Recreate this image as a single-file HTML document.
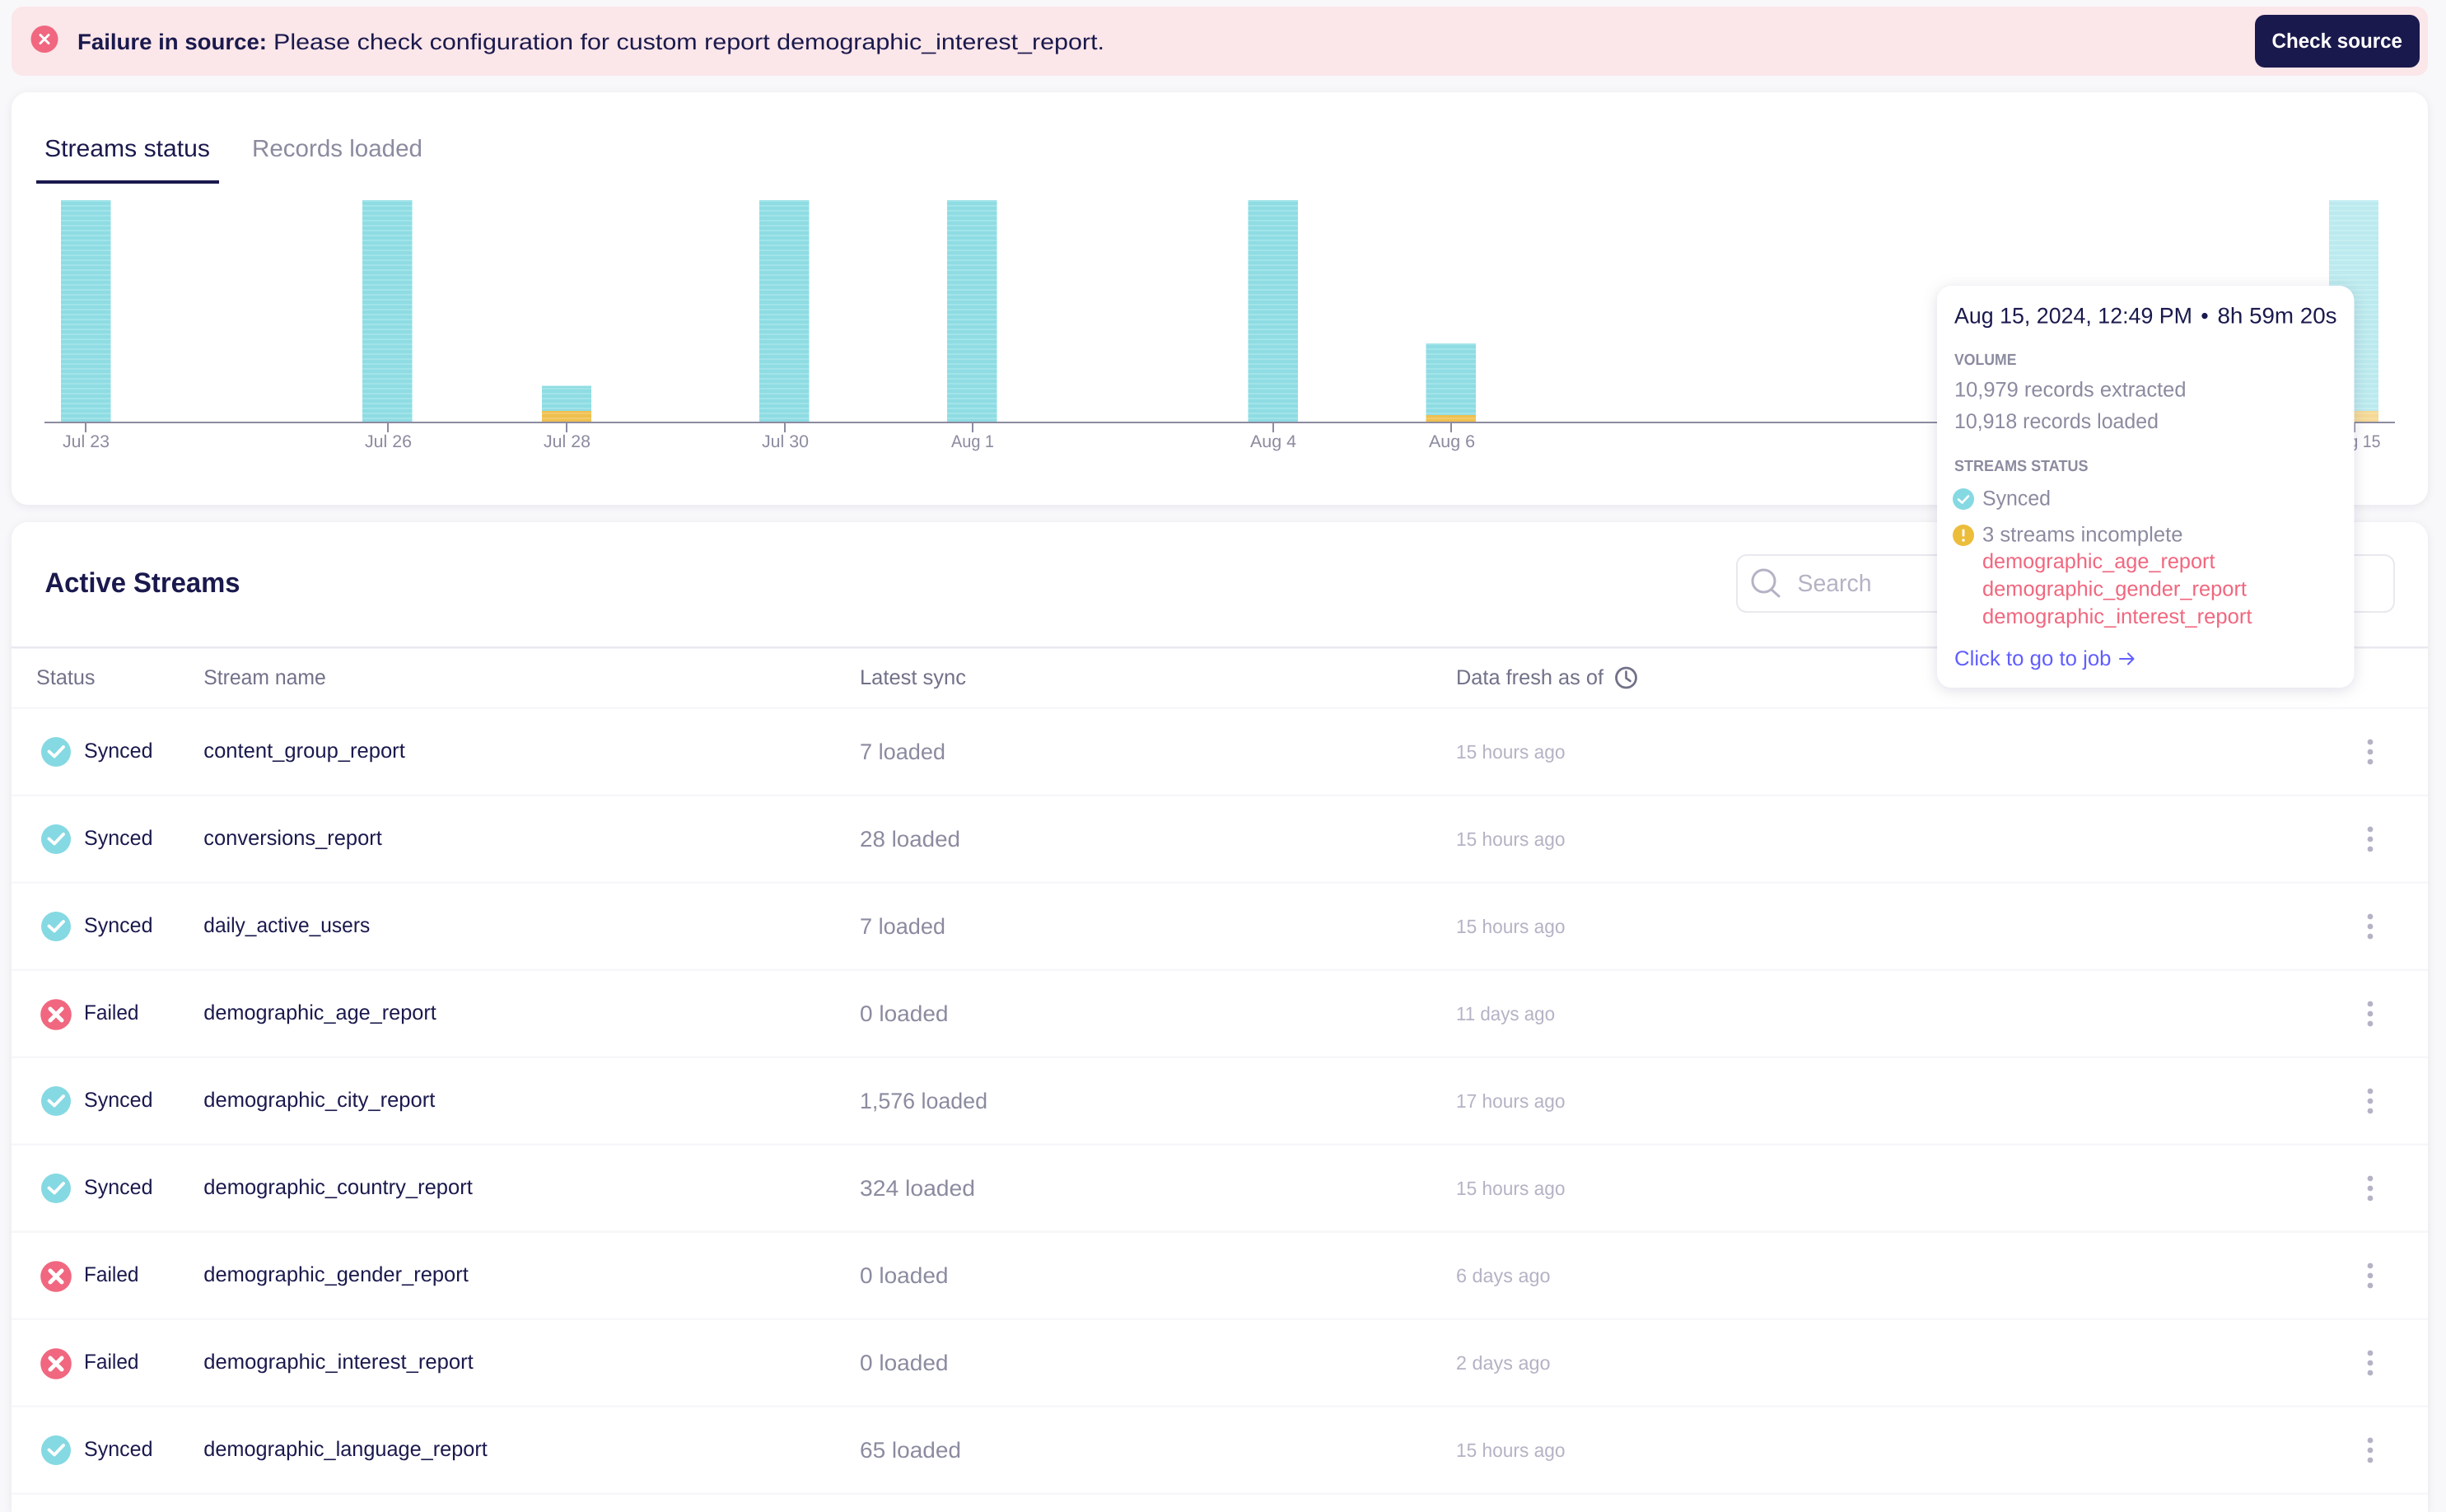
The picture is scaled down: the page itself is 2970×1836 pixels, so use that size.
<!DOCTYPE html>
<html><head><meta charset="utf-8"><title>Streams</title>
<style>
html,body{margin:0;padding:0;width:2970px;height:1836px;overflow:hidden;background:#f8f8fb}
svg{display:block;position:absolute;left:0;top:0;overflow:hidden}
text{font-family:"Liberation Sans",sans-serif;text-rendering:geometricPrecision;fill:#1a194d}
.row{font-size:25.5px}
.hd{font-size:25.5px;fill:#717189}
.lat{font-size:27px;fill:#8b8ba0}
.fr{font-size:23.5px;fill:#b4b3c5}
.ax{font-size:21px;fill:#8b8ba0}
.tg{font-size:25.5px;fill:#8b8ba0}
.cap{font-size:19px;font-weight:bold;fill:#8b8ba0}
.red{font-size:25.5px;fill:#f0677f}
</style></head><body>
<svg width="2970" height="1836" viewBox="0 0 2970 1836" xmlns="http://www.w3.org/2000/svg">
<defs>
<pattern id="pt" width="10" height="6" patternUnits="userSpaceOnUse" y="243"><rect width="10" height="6" fill="#8fdce3"/><rect y="0" width="10" height="2" fill="#a2e4e9"/></pattern>
<pattern id="py" width="10" height="6" patternUnits="userSpaceOnUse" y="243"><rect width="10" height="6" fill="#efc04f"/><rect y="0" width="10" height="2" fill="#f2cb6b"/></pattern>
<filter id="sh" x="-5%" y="-5%" width="110%" height="110%"><feDropShadow dx="0" dy="2" stdDeviation="5" flood-color="#1a194d" flood-opacity=".07"/></filter>
<filter id="sh2" x="-10%" y="-10%" width="120%" height="120%"><feDropShadow dx="0" dy="3" stdDeviation="9" flood-color="#1a194d" flood-opacity=".13"/></filter>
<symbol id="ok" viewBox="-18 -18 36 36" overflow="visible"><circle r="18" fill="#85d9e2"/><path d="M-8.5-0.5L-2 5.500L9-6" fill="none" stroke="#fff" stroke-width="3.800" stroke-linecap="round" stroke-linejoin="round"/></symbol>
<symbol id="no" viewBox="-18 -18 36 36" overflow="visible"><circle r="18.800" fill="#f0677f"/><path d="M-7-7L7 7M7-7L-7 7" fill="none" stroke="#fff" stroke-width="5" stroke-linecap="round"/></symbol>
<g id="dots" fill="#b4b3c5"><circle cx="2878" cy="901" r="3.4"/><circle cx="2878" cy="913" r="3.4"/><circle cx="2878" cy="925" r="3.4"/></g>
</defs>

<!-- banner -->
<rect x="14" y="8" width="2934" height="84" rx="14" fill="#fbe6e9"/>
<circle cx="54" cy="47.5" r="16.5" fill="#f0677f"/>
<path d="M49 42.5L59 52.5M59 42.5L49 52.5" stroke="#fff" stroke-width="3" stroke-linecap="round"/>
<text x="94" y="60" font-size="27" font-weight="bold" textLength="230" lengthAdjust="spacingAndGlyphs">Failure in source:</text>
<text x="332" y="60" font-size="27" textLength="1009" lengthAdjust="spacingAndGlyphs">Please check configuration for custom report demographic_interest_report.</text>
<rect x="2738" y="18" width="200" height="64" rx="12" fill="#1a194d"/>
<text x="2758.5" y="58" font-size="25" font-weight="bold" style="fill:#fff" textLength="158.5" lengthAdjust="spacingAndGlyphs">Check source</text>

<!-- chart card -->
<rect x="14" y="112" width="2934" height="501" rx="20" fill="#fff" filter="url(#sh)"/>
<text x="54" y="190" font-size="29" textLength="201" lengthAdjust="spacingAndGlyphs">Streams status</text>
<text x="306" y="190" font-size="29" style="fill:#8b8ba0" textLength="207" lengthAdjust="spacingAndGlyphs">Records loaded</text>
<rect x="44" y="219" width="222" height="4" fill="#1a194d"/>

<g>
<rect x="74" y="243" width="60.5" height="269" fill="url(#pt)"/>
<rect x="440" y="243" width="60.5" height="269" fill="url(#pt)"/>
<rect x="658" y="468.500" width="60" height="30.500" fill="url(#pt)"/>
<rect x="658" y="499" width="60" height="13" fill="url(#py)"/>
<rect x="922" y="243" width="60.5" height="269" fill="url(#pt)"/>
<rect x="1150" y="243" width="60.5" height="269" fill="url(#pt)"/>
<rect x="1515.500" y="243" width="60.5" height="269" fill="url(#pt)"/>
<rect x="1731.500" y="417" width="60.5" height="87" fill="url(#pt)"/>
<rect x="1731.500" y="504" width="60.5" height="8" fill="url(#py)"/>
<g opacity=".6"><rect x="2828" y="243" width="60" height="256" fill="url(#pt)"/><rect x="2828" y="499" width="60" height="13" fill="url(#py)"/></g>
</g>
<rect x="54" y="512" width="2854" height="2" fill="#8b8ba0"/>
<g fill="#8b8ba0"><rect x="103" y="514" width="2" height="11"/><rect x="470" y="514" width="2" height="11"/><rect x="687" y="514" width="2" height="11"/><rect x="952" y="514" width="2" height="11"/><rect x="1180" y="514" width="2" height="11"/><rect x="1545" y="514" width="2" height="11"/><rect x="1761" y="514" width="2" height="11"/><rect x="2858" y="514" width="2" height="11"/></g>
<text class="ax" x="76" y="543" textLength="57" lengthAdjust="spacingAndGlyphs">Jul 23</text>
<text class="ax" x="443" y="543" textLength="57" lengthAdjust="spacingAndGlyphs">Jul 26</text>
<text class="ax" x="660" y="543" textLength="57" lengthAdjust="spacingAndGlyphs">Jul 28</text>
<text class="ax" x="925" y="543" textLength="57" lengthAdjust="spacingAndGlyphs">Jul 30</text>
<text class="ax" x="1155" y="543" textLength="52" lengthAdjust="spacingAndGlyphs">Aug 1</text>
<text class="ax" x="1518" y="543" textLength="56" lengthAdjust="spacingAndGlyphs">Aug 4</text>
<text class="ax" x="1735" y="543" textLength="56" lengthAdjust="spacingAndGlyphs">Aug 6</text>
<text class="ax" x="2828.500" y="543" textLength="62" lengthAdjust="spacingAndGlyphs">Aug 15</text>

<!-- streams card -->
<path d="M14 1836V654a20 20 0 0 1 20-20H2928a20 20 0 0 1 20 20V1836Z" fill="#fff" filter="url(#sh)"/>
<text x="54.500" y="719" font-size="34" font-weight="bold" textLength="237" lengthAdjust="spacingAndGlyphs">Active Streams</text>
<rect x="2109" y="674" width="798" height="69" rx="12" fill="#fff" stroke="#e8e8ef" stroke-width="2"/>
<circle cx="2141.500" cy="705.500" r="13.500" fill="none" stroke="#b4b3c5" stroke-width="3"/>
<path d="M2151 716L2160 724" stroke="#b4b3c5" stroke-width="3" stroke-linecap="round"/>
<text x="2182.500" y="718" font-size="29" style="fill:#b4b3c5" textLength="90" lengthAdjust="spacingAndGlyphs">Search</text>
<rect x="14" y="785" width="2934" height="2.500" fill="#e9e9f0"/>

<text class="hd" x="44" y="831" textLength="71.500" lengthAdjust="spacingAndGlyphs">Status</text>
<text class="hd" x="247.300" y="831" textLength="148.500" lengthAdjust="spacingAndGlyphs">Stream name</text>
<text class="hd" x="1044" y="831" textLength="129" lengthAdjust="spacingAndGlyphs">Latest sync</text>
<text class="hd" x="1768" y="831" textLength="179" lengthAdjust="spacingAndGlyphs">Data fresh as of</text>
<circle cx="1974.500" cy="823" r="12" fill="none" stroke="#717189" stroke-width="2.800"/>
<path d="M1974.500 815.500V823.500L1979.500 827" fill="none" stroke="#717189" stroke-width="2.600" stroke-linecap="round" stroke-linejoin="round"/>

<g fill="#f7f7fa">
<rect x="14" y="858.500" width="2934" height="2.500"/><rect x="14" y="964.500" width="2934" height="2.500"/><rect x="14" y="1070.500" width="2934" height="2.500"/><rect x="14" y="1176.500" width="2934" height="2.500"/><rect x="14" y="1282.500" width="2934" height="2.500"/><rect x="14" y="1388.500" width="2934" height="2.500"/><rect x="14" y="1494.500" width="2934" height="2.500"/><rect x="14" y="1600.500" width="2934" height="2.500"/><rect x="14" y="1706.500" width="2934" height="2.500"/><rect x="14" y="1812.500" width="2934" height="2.500"/>
</g>

<use href="#dots"/><use href="#dots" y="106"/><use href="#dots" y="212"/><use href="#dots" y="318"/><use href="#dots" y="424"/><use href="#dots" y="530"/><use href="#dots" y="636"/><use href="#dots" y="742"/><use href="#dots" y="848"/>

<!-- rows -->
<use href="#ok" x="50" y="895" width="36" height="36"/>
<text class="row" x="102" y="920" textLength="83.500" lengthAdjust="spacingAndGlyphs">Synced</text>
<text class="row" x="247.300" y="920" textLength="244.500" lengthAdjust="spacingAndGlyphs">content_group_report</text>
<text class="lat" x="1044" y="922" textLength="104" lengthAdjust="spacingAndGlyphs">7 loaded</text>
<text class="fr" x="1768" y="921" textLength="132.500" lengthAdjust="spacingAndGlyphs">15 hours ago</text>

<use href="#ok" x="50" y="1001" width="36" height="36"/>
<text class="row" x="102" y="1026" textLength="83.500" lengthAdjust="spacingAndGlyphs">Synced</text>
<text class="row" x="247.300" y="1026" textLength="216.500" lengthAdjust="spacingAndGlyphs">conversions_report</text>
<text class="lat" x="1044" y="1028" textLength="122" lengthAdjust="spacingAndGlyphs">28 loaded</text>
<text class="fr" x="1768" y="1027" textLength="132.500" lengthAdjust="spacingAndGlyphs">15 hours ago</text>

<use href="#ok" x="50" y="1107" width="36" height="36"/>
<text class="row" x="102" y="1132" textLength="83.500" lengthAdjust="spacingAndGlyphs">Synced</text>
<text class="row" x="247.300" y="1132" textLength="202" lengthAdjust="spacingAndGlyphs">daily_active_users</text>
<text class="lat" x="1044" y="1134" textLength="104" lengthAdjust="spacingAndGlyphs">7 loaded</text>
<text class="fr" x="1768" y="1133" textLength="132.500" lengthAdjust="spacingAndGlyphs">15 hours ago</text>

<use href="#no" x="50" y="1214" width="36" height="36"/>
<text class="row" x="102" y="1238" textLength="66.500" lengthAdjust="spacingAndGlyphs">Failed</text>
<text class="row" x="247.300" y="1238" textLength="282.500" lengthAdjust="spacingAndGlyphs">demographic_age_report</text>
<text class="lat" x="1044" y="1240" textLength="107.500" lengthAdjust="spacingAndGlyphs">0 loaded</text>
<text class="fr" x="1768" y="1239" textLength="120" lengthAdjust="spacingAndGlyphs">11 days ago</text>

<use href="#ok" x="50" y="1319" width="36" height="36"/>
<text class="row" x="102" y="1344" textLength="83.500" lengthAdjust="spacingAndGlyphs">Synced</text>
<text class="row" x="247.300" y="1344" textLength="281" lengthAdjust="spacingAndGlyphs">demographic_city_report</text>
<text class="lat" x="1044" y="1346" textLength="155" lengthAdjust="spacingAndGlyphs">1,576 loaded</text>
<text class="fr" x="1768" y="1345" textLength="132.500" lengthAdjust="spacingAndGlyphs">17 hours ago</text>

<use href="#ok" x="50" y="1425" width="36" height="36"/>
<text class="row" x="102" y="1450" textLength="83.500" lengthAdjust="spacingAndGlyphs">Synced</text>
<text class="row" x="247.300" y="1450" textLength="326.500" lengthAdjust="spacingAndGlyphs">demographic_country_report</text>
<text class="lat" x="1044" y="1452" textLength="140" lengthAdjust="spacingAndGlyphs">324 loaded</text>
<text class="fr" x="1768" y="1451" textLength="132.500" lengthAdjust="spacingAndGlyphs">15 hours ago</text>

<use href="#no" x="50" y="1532" width="36" height="36"/>
<text class="row" x="102" y="1556" textLength="66.500" lengthAdjust="spacingAndGlyphs">Failed</text>
<text class="row" x="247.300" y="1556" textLength="321.500" lengthAdjust="spacingAndGlyphs">demographic_gender_report</text>
<text class="lat" x="1044" y="1558" textLength="107.500" lengthAdjust="spacingAndGlyphs">0 loaded</text>
<text class="fr" x="1768" y="1557" textLength="114.500" lengthAdjust="spacingAndGlyphs">6 days ago</text>

<use href="#no" x="50" y="1638" width="36" height="36"/>
<text class="row" x="102" y="1662" textLength="66.500" lengthAdjust="spacingAndGlyphs">Failed</text>
<text class="row" x="247.300" y="1662" textLength="327.500" lengthAdjust="spacingAndGlyphs">demographic_interest_report</text>
<text class="lat" x="1044" y="1664" textLength="107.500" lengthAdjust="spacingAndGlyphs">0 loaded</text>
<text class="fr" x="1768" y="1663" textLength="114.500" lengthAdjust="spacingAndGlyphs">2 days ago</text>

<use href="#ok" x="50" y="1743" width="36" height="36"/>
<text class="row" x="102" y="1768" textLength="83.500" lengthAdjust="spacingAndGlyphs">Synced</text>
<text class="row" x="247.300" y="1768" textLength="344.500" lengthAdjust="spacingAndGlyphs">demographic_language_report</text>
<text class="lat" x="1044" y="1770" textLength="123" lengthAdjust="spacingAndGlyphs">65 loaded</text>
<text class="fr" x="1768" y="1769" textLength="132.500" lengthAdjust="spacingAndGlyphs">15 hours ago</text>

<!-- tooltip -->
<rect x="2352" y="347" width="506.500" height="488" rx="18" fill="#fff" filter="url(#sh2)"/>
<text x="2373" y="392.500" font-size="27" textLength="289" lengthAdjust="spacingAndGlyphs">Aug 15, 2024, 12:49 PM</text>
<text x="2677" y="392.500" font-size="27" text-anchor="middle">•</text>
<text x="2692.500" y="392.500" font-size="27" textLength="145" lengthAdjust="spacingAndGlyphs">8h 59m 20s</text>
<text class="cap" x="2373" y="443" textLength="75.500" lengthAdjust="spacingAndGlyphs">VOLUME</text>
<text class="tg" x="2373" y="481.500" textLength="281.500" lengthAdjust="spacingAndGlyphs">10,979 records extracted</text>
<text class="tg" x="2373" y="520" textLength="248" lengthAdjust="spacingAndGlyphs">10,918 records loaded</text>
<text class="cap" x="2373" y="572" textLength="162.500" lengthAdjust="spacingAndGlyphs">STREAMS STATUS</text>
<circle cx="2384" cy="606" r="13" fill="#85d9e2"/>
<path d="M2378 606.500L2382.500 610.500L2390 602.500" fill="none" stroke="#fff" stroke-width="2.600" stroke-linecap="round" stroke-linejoin="round"/>
<text class="tg" x="2407" y="613.500" textLength="83" lengthAdjust="spacingAndGlyphs">Synced</text>
<circle cx="2384" cy="650" r="13" fill="#ecbd3b"/>
<rect x="2382.600" y="642.500" width="2.800" height="9" rx="1.400" fill="#fff"/><circle cx="2384" cy="656" r="1.700" fill="#fff"/>
<text class="tg" x="2407" y="657.500" textLength="243.500" lengthAdjust="spacingAndGlyphs">3 streams incomplete</text>
<text class="red" x="2407" y="690" textLength="282.500" lengthAdjust="spacingAndGlyphs">demographic_age_report</text>
<text class="red" x="2407" y="723.500" textLength="321" lengthAdjust="spacingAndGlyphs">demographic_gender_report</text>
<text class="red" x="2407" y="757" textLength="327.500" lengthAdjust="spacingAndGlyphs">demographic_interest_report</text>
<text x="2373" y="808" style="font-size:25.5px;fill:#615eff" textLength="190.500" lengthAdjust="spacingAndGlyphs">Click to go to job</text>
<path d="M2574 800H2590.500M2584 793.500L2590.500 800L2584 806.500" fill="none" stroke="#615eff" stroke-width="2" stroke-linecap="round" stroke-linejoin="round"/>
</svg>
</body></html>
